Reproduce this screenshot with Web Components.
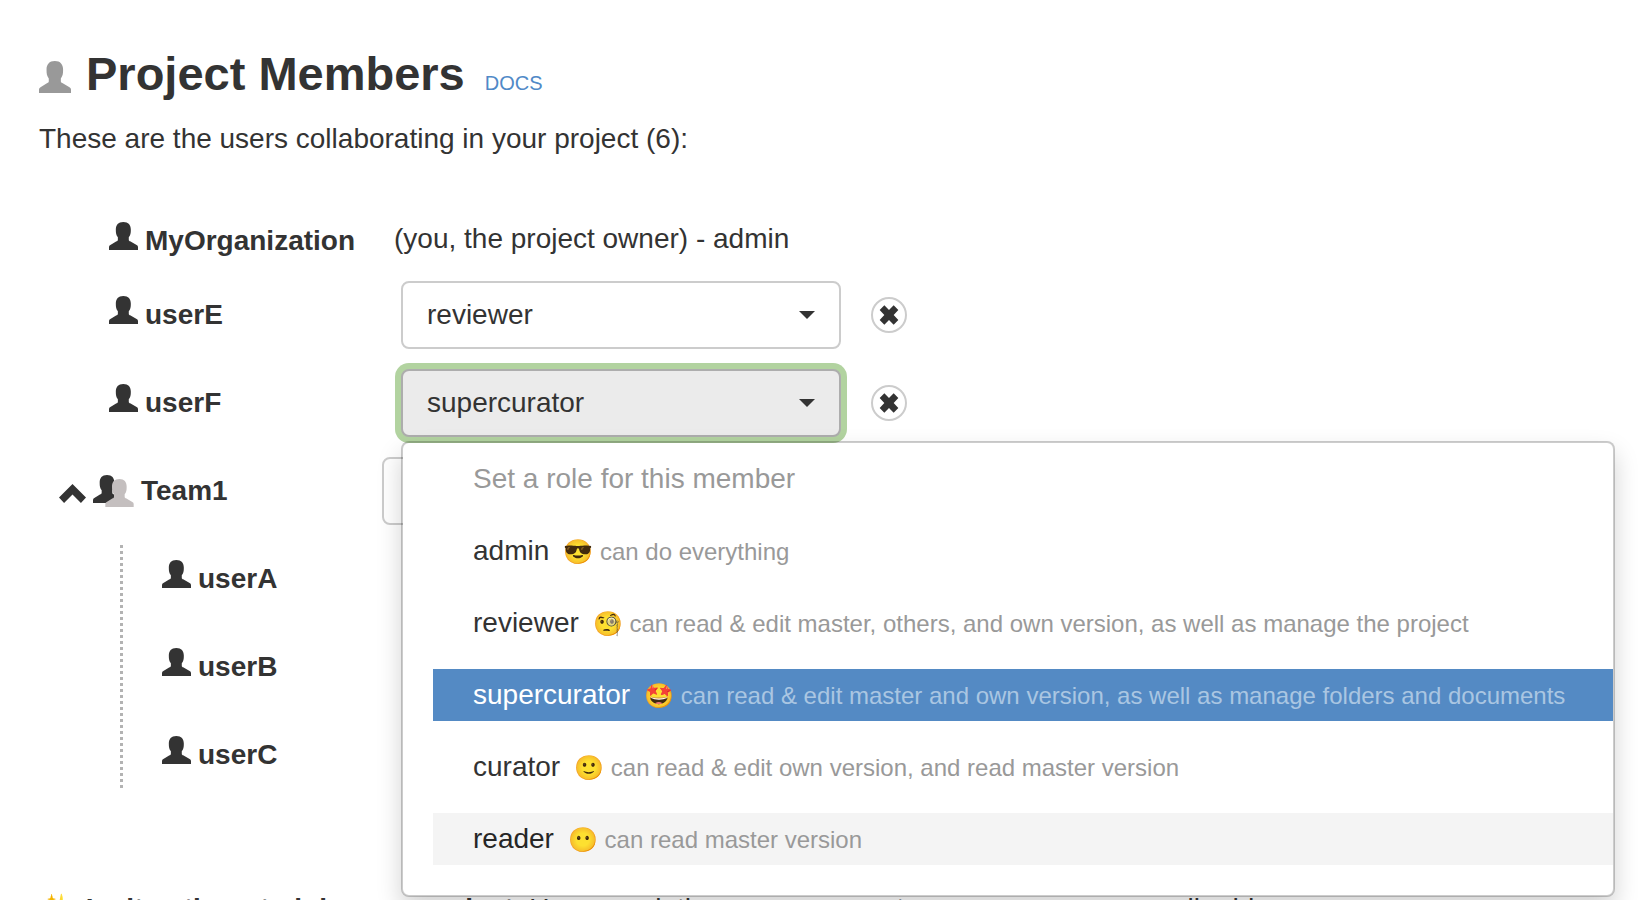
<!DOCTYPE html>
<html lang="en">
<head>
<meta charset="utf-8">
<title>Project Members</title>
<style>
  body {
    margin: 0;
    background: #fff;
    color: #333;
    font: 28px/40px "Liberation Sans", Arial, sans-serif;
  }
</style>
</head>
<body>
<members-page></members-page>

<script>
const ROLES = [
  ['admin', '😎', 'can do everything'],
  ['reviewer', '🧐', 'can read & edit master, others, and own version, as well as manage the project'],
  ['supercurator', '🤩', 'can read & edit master and own version, as well as manage folders and documents'],
  ['curator', '🙂', 'can read & edit own version, and read master version'],
  ['reader', '😶', 'can read master version'],
];

const USER_PATH = 'M42 0C57 0 64 9 64 23C64 34 63 39 58 46V53C58 56 60 57 62 58L81 69Q85 71 85 75V84H0V75Q0 71 4 69L22 58C24 57 26 56 26 53V46C21 39 20 34 20 23C20 9 27 0 42 0Z';

const esc = (s) => s.replace(/&/g, '&amp;');

class BaseElement extends HTMLElement {
  connectedCallback() {
    if (this.shadowRoot) return;
    this.attachShadow({ mode: 'open' }).innerHTML = this.render();
  }
}

/* Single-person glyph */
customElements.define('user-icon', class extends BaseElement {
  render() {
    return `
      <style>
        :host { display: inline-block; width: 29px; height: 28px; flex: none; }
        svg { display: block; width: 100%; height: 100%; fill: currentColor; }
      </style>
      <svg viewBox="0 0 85 84" preserveAspectRatio="none" aria-hidden="true"><path d="${USER_PATH}"/></svg>`;
  }
});

/* Two overlapping people, used for teams */
customElements.define('team-icon', class extends BaseElement {
  render() {
    return `
      <style>
        :host { display: inline-block; width: 41px; height: 32px; flex: none; }
        svg { display: block; width: 100%; height: 100%; }
      </style>
      <svg viewBox="0 0 123 96" aria-hidden="true">
        <path fill="#333" d="${USER_PATH}"/>
        <path fill="#c4bfbf" transform="translate(37 12)" d="${USER_PATH}"/>
      </svg>`;
  }
});

/* Page title with its docs link */
customElements.define('page-title', class extends BaseElement {
  render() {
    return `
      <style>
        :host { display: flex; align-items: baseline; }
        user-icon { width: 32px; height: 32px; margin-top: 4px; color: #999; align-self: center; }
        h1 { margin: 0 20px 0 15px; font-size: 47px; line-height: 56px; font-weight: bold; }
        a { font-size: 20px; color: #5089c7; text-decoration: none; }
      </style>
      <user-icon></user-icon>
      <h1><slot></slot></h1>
      <a href="#docs">DOCS</a>`;
  }
});

/* The open list of roles */
customElements.define('role-menu', class extends BaseElement {
  render() {
    const items = ROLES.map(([name, face, text]) => {
      const cls = name === this.getAttribute('value') ? 'selected' : name === this.getAttribute('hover') ? 'hover' : '';
      return `<li role="option" class="${cls}" aria-selected="${cls === 'selected'}">${name}<small>${face} ${esc(text)}</small></li>`;
    }).join('');
    return `
      <style>
        :host {
          display: block; box-sizing: border-box; width: max-content;
          padding: 10px 0 30px 30px;
          background: #fff; background-clip: padding-box;
          border: 2px solid rgba(0,0,0,.2); border-radius: 8px;
          box-shadow: 0 12px 24px rgba(0,0,0,.175);
        }
        ul { display: flex; flex-direction: column; gap: 20px; margin: 0; padding: 0; list-style: none; }
        li { padding: 6px 48px 6px 40px; line-height: 40px; white-space: nowrap; color: #333; }
        .heading { color: #999; }
        small { margin-left: 14px; font-size: 24px; line-height: 24px; color: #999; }
        .selected { background: #548ac4; color: #fff; }
        .selected small { color: #aac6e2; }
        .hover { background: #f4f4f4; color: #262626; }
      </style>
      <ul role="listbox" aria-label="Roles">
        <li class="heading" role="presentation">Set a role for this member</li>
        ${items}
      </ul>`;
  }
});

/* Role drop-down, with the list slotted below it when open */
customElements.define('role-select', class extends BaseElement {
  render() {
    const value = this.getAttribute('value');
    const options = ROLES.map(([name]) => `<option${name === value ? ' selected' : ''}>${name}</option>`).join('');
    return `
      <style>
        :host { display: block; position: relative; width: 440px; height: 68px; }
        select {
          box-sizing: border-box; width: 100%; height: 100%; margin: 0; padding: 0 56px 0 24px;
          appearance: none; outline: none; cursor: pointer;
          font: inherit; color: inherit; background: #fff;
          border: 2px solid #ccc; border-radius: 8px;
        }
        :host([open]) select { background: #ebebeb; border-color: #adadad; box-shadow: 0 0 0 6px #b2d3a0; }
        svg { position: absolute; right: 26px; top: 30px; width: 16px; height: 8px; fill: #333; pointer-events: none; }
        ::slotted(role-menu) { position: absolute; z-index: 2; left: 0; top: 72px; }
      </style>
      <select aria-label="Role of ${this.getAttribute('member')}">${options}</select>
      <svg viewBox="0 0 16 8" aria-hidden="true"><path d="M0 0H16L8 8Z"/></svg>
      <slot></slot>`;
  }
});

/* Round remove button */
customElements.define('remove-button', class extends BaseElement {
  render() {
    return `
      <style>
        :host { display: block; }
        button {
          display: grid; place-items: center; box-sizing: border-box;
          width: 36px; height: 36px; margin: 0; padding: 0;
          background: #fff; border: 2px solid #ccc; border-radius: 50%; cursor: pointer;
        }
        svg { display: block; width: 20px; height: 20px; fill: #333; }
      </style>
      <button type="button" aria-label="Remove ${this.getAttribute('member')}">
        <svg viewBox="0 0 60 60"><path d="M16 1L30 15L44 1L58 15L44 30L58 45L44 59L30 45L16 59L2 45L16 30L2 15Z"/></svg>
      </button>`;
  }
});

/* One member or team: name at the left, role controls at the right */
customElements.define('member-row', class extends BaseElement {
  render() {
    const name = this.getAttribute('name');
    const kind = this.getAttribute('kind');
    return `
      <style>
        :host { display: grid; grid-template-columns: 343px 1fr; align-items: center; height: 88px; }
        :host([kind="owner"]) { height: 60px; }
        :host([kind="child"]) { grid-template-columns: 1fr; }
        .name { display: flex; align-items: baseline; gap: 7px; padding-left: 70px; font-weight: bold; }
        :host([kind="team"]) .name { padding-left: 20px; }
        :host([kind="child"]) .name { padding-left: 39px; }
        team-icon { align-self: center; }
        button { align-self: center; margin: 4px 0 0; padding: 0; border: 0; background: none; cursor: pointer; }
        button svg { display: block; width: 27px; height: 19px; fill: #333; }
        .role { display: flex; align-items: center; gap: 30px; padding-left: 19px; }
        :host([kind="owner"]) .role { padding: 0 0 4px 12px; }
        :host([kind="team"]) .role { padding-left: 0; }
      </style>
      <div class="name">
        ${kind === 'team'
          ? `<button type="button" aria-label="Collapse ${name}"><svg viewBox="0 0 80 56"><path d="M40 0L80 40L65 56L40 31L15 56L0 40Z"/></svg></button><team-icon></team-icon>`
          : '<user-icon></user-icon>'}
        <span>${name}</span>
      </div>
      ${kind === 'child' ? '' : '<div class="role"><slot></slot></div>'}`;
  }
});

/* Members of a team, behind a dotted guide line */
customElements.define('team-members', class extends BaseElement {
  render() {
    return `
      <style>
        :host { display: flex; padding-left: 81px; }
        .guide { width: 3px; margin: 10px 0; background: repeating-linear-gradient(#b3b3b3 0 3px, transparent 3px 6px); }
        .rows { flex: 1; }
      </style>
      <div class="guide"></div>
      <div class="rows"><slot></slot></div>`;
  }
});

customElements.define('members-page', class extends BaseElement {
  render() {
    return `
      <style>
        :host { display: block; padding: 46px 24px 0 39px; }
        p { margin: 0; }
        .intro { margin: 16px 0 52px; }
        .invite { margin-top: 90px; }
        .spark { margin-right: 4px; }
      </style>
      <page-title>Project Members</page-title>
      <p class="intro">These are the users collaborating in your project (6):</p>
      <section aria-label="Members">
        <member-row kind="owner" name="MyOrganization">(you, the project owner) - admin</member-row>
        <member-row name="userE">
          <role-select member="userE" value="reviewer"></role-select>
          <remove-button member="userE"></remove-button>
        </member-row>
        <member-row name="userF">
          <role-select member="userF" value="supercurator" open>
            <role-menu value="supercurator" hover="reader"></role-menu>
          </role-select>
          <remove-button member="userF"></remove-button>
        </member-row>
        <member-row kind="team" name="Team1">
          <role-select member="Team1" value="reader"></role-select>
        </member-row>
        <team-members>
          <member-row kind="child" name="userA"></member-row>
          <member-row kind="child" name="userB"></member-row>
          <member-row kind="child" name="userC"></member-row>
        </team-members>
      </section>
      <p class="invite"><span class="spark">✨</span> <b>Invite others to join your project.</b> Users work the same spaces to measure scores as all add</p>`;
  }
});
</script>
</body>
</html>
